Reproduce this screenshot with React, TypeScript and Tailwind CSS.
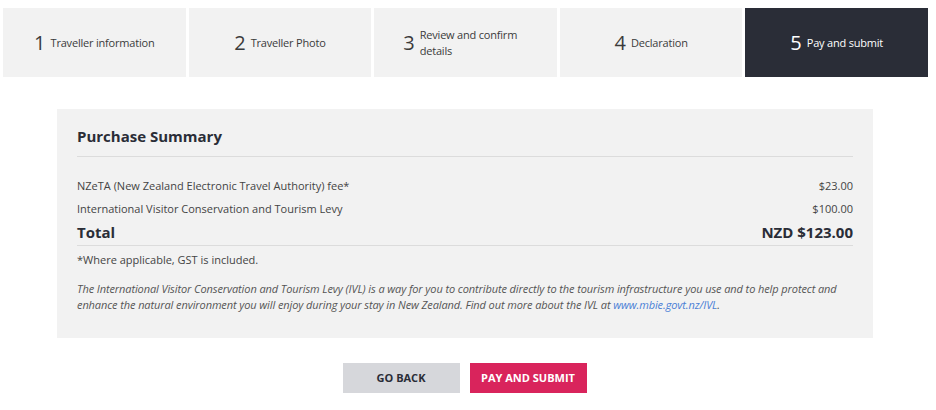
const STEPS = [
  { n: 1, label: 'Traveller information' },
  { n: 2, label: 'Traveller Photo' },
  { n: 3, label: 'Review and confirm details' },
  { n: 4, label: 'Declaration' },
  { n: 5, label: 'Pay and submit' },
]

const ACTIVE = 5

function StepTab({ n, label }: { n: number; label: string }) {
  const active = n === ACTIVE
  const wrap = n === 3
  return (
    <div
      className={`flex-1 h-[69px] flex items-center justify-center gap-[5px] ${
        active ? 'bg-[#2a2d37] text-white' : 'bg-[#f2f2f2] text-[#3b3b3b]'
      }`}
    >
      <span className="text-[20px] leading-none">{n}</span>
      <span className={`text-[11px] tracking-[-0.2px] leading-[16px] ${wrap ? 'w-[108px]' : ''}`}>{label}</span>
    </div>
  )
}

function Row({ label, amount }: { label: string; amount: string }) {
  return (
    <div className="flex justify-between text-[11px] text-[#444] h-[23px] items-center">
      <span>{label}</span>
      <span>{amount}</span>
    </div>
  )
}

export default function App() {
  return (
    <div
      className="w-[936px] h-[410px] bg-white overflow-hidden"
      style={{ fontFamily: '"Open Sans", "Noto Sans", sans-serif' }}
    >
      <div className="flex gap-[3px] px-[3px] pt-[8px] pr-[8px]">
        {STEPS.map((s) => (
          <StepTab key={s.n} {...s} />
        ))}
      </div>

      <section className="ml-[57px] mt-[32px] w-[816px] h-[229px] bg-[#f2f2f2] px-[20px] pt-[17px]">
        <h2 className="text-[15px] font-bold text-[#2a2d37] leading-[20px]">Purchase Summary</h2>
        <div className="mt-[10px] border-t border-[#dcdcdc]" />
        <div className="mt-[18px]">
          <Row label="NZeTA (New Zealand Electronic Travel Authority) fee*" amount="$23.00" />
          <Row label="International Visitor Conservation and Tourism Levy" amount="$100.00" />
          <div className="flex justify-between items-center h-[23px] text-[15px] font-bold text-[#2a2d37]">
            <span>Total</span>
            <span>NZD $123.00</span>
          </div>
        </div>
        <div className="mt-[1px] border-t border-[#dcdcdc]" />
        <p className="mt-[6px] text-[11px] text-[#444] leading-[16px]">*Where applicable, GST is included.</p>
        <p className="mt-[13px] text-[11px] italic text-[#555] leading-[16px] tracking-[-0.1px]">
          The International Visitor Conservation and Tourism Levy (IVL) is a way for you to contribute directly to the
          tourism infrastructure you use and to help protect and
          <br />
          enhance the natural environment you will enjoy during your stay in New Zealand. Find out more about the IVL
          at <a className="text-[#4a7fd6]">www.mbie.govt.nz/IVL</a>.
        </p>
      </section>

      <div className="flex justify-center gap-[10px] mt-[25px] pr-[7px]">
        <button className="w-[117px] h-[30px] bg-[#d6d7db] text-[#2a2d37] text-[11px] font-bold uppercase">
          Go back
        </button>
        <button className="w-[117px] h-[30px] bg-[#d9245c] text-white text-[11px] font-bold uppercase">
          Pay and submit
        </button>
      </div>
    </div>
  )
}
